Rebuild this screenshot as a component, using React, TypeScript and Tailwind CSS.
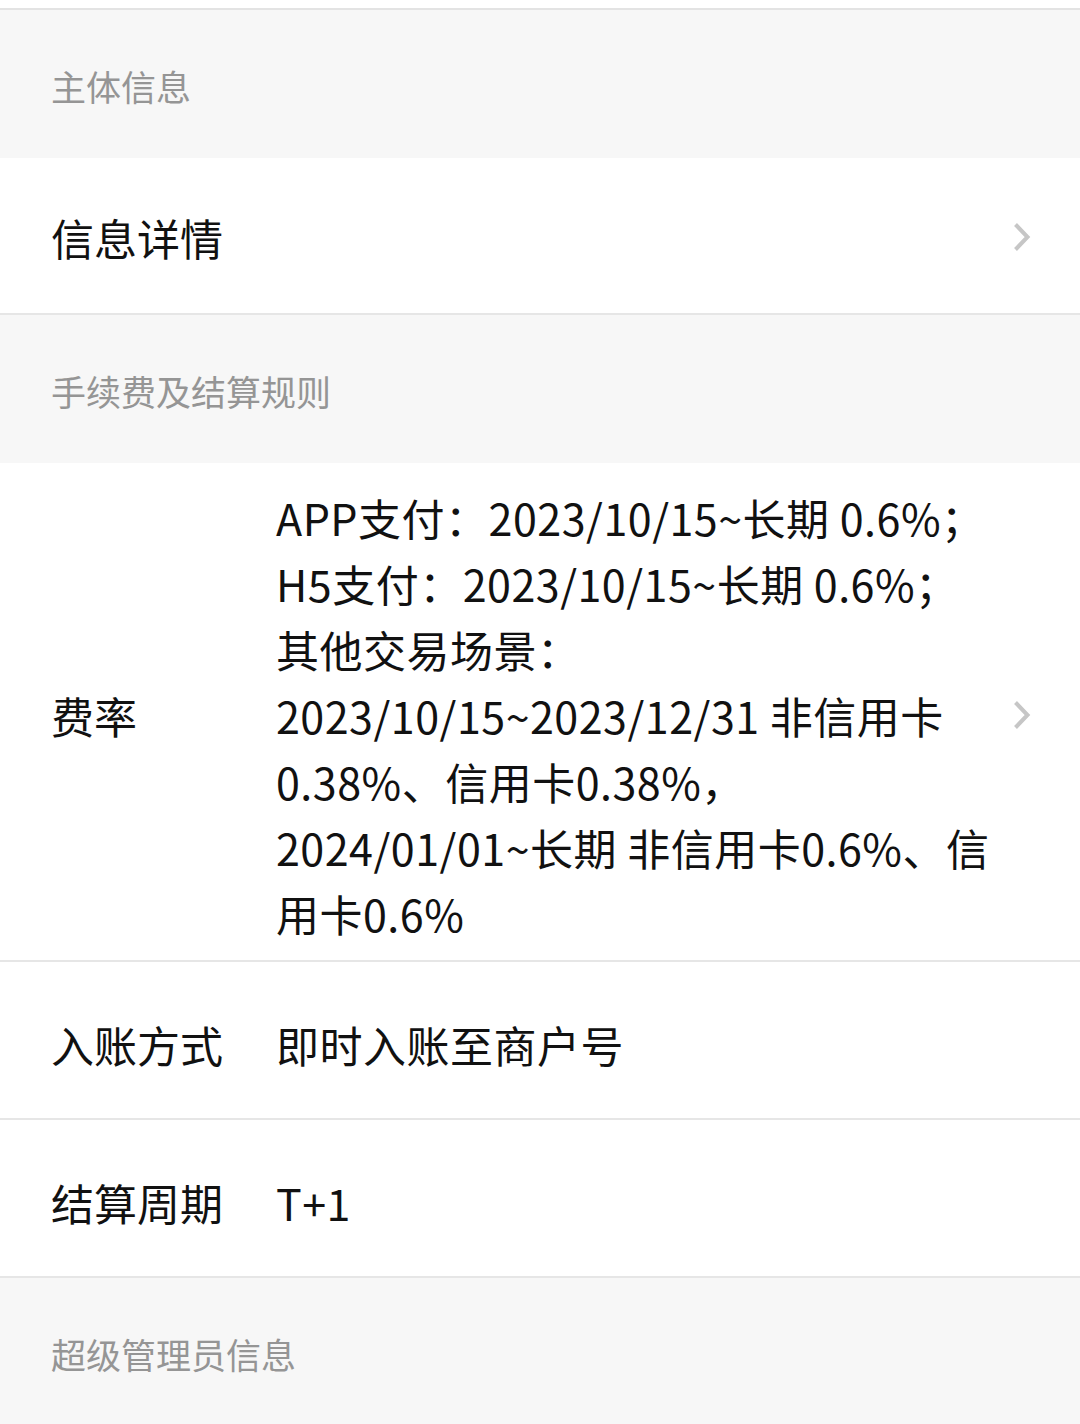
import React from "react";

const font = { fontFamily: '"Noto Sans CJK SC", "Noto Sans", sans-serif' };

function Chevron() {
  return (
    <svg width="20" height="32" viewBox="0 0 20 32" className="shrink-0">
      <path d="M3.5 3.5 L15.5 16 L3.5 28.5" fill="none" stroke="#c6c6c6" strokeWidth="4" strokeLinecap="butt" strokeLinejoin="miter" />
    </svg>
  );
}

function SectionHeader({ title }: { title: string }) {
  return (
    <div className="h-[148px] bg-[#f7f7f7] px-[51px] flex items-center pt-[4px] text-[35px] text-[#959595]">
      {title}
    </div>
  );
}

function Row({ label, value }: { label: string; value?: React.ReactNode }) {
  return (
    <div className="h-[158px] bg-white border-b-2 border-[#e6e6e6] pl-[51px] pr-[48px] pt-[8px] flex items-center text-[43px] text-[#111111]">
      <div className="w-[225px] shrink-0 whitespace-nowrap">{label}</div>
      <div className="flex-1 whitespace-nowrap tracking-[0.5px]">{value}</div>
    </div>
  );
}

const rateLines = [
  "APP支付：2023/10/15~长期 0.6%；",
  "H5支付：2023/10/15~长期 0.6%；",
  "其他交易场景：",
  "2023/10/15~2023/12/31 非信用卡",
  "0.38%、信用卡0.38%，",
  "2024/01/01~长期 非信用卡0.6%、信",
  "用卡0.6%",
];

export default function App() {
  return (
    <div className="w-[1080px] min-h-[1424px] bg-[#f7f7f7]" style={font}>
      <div className="h-[8px] bg-white border-b-2 border-[#e3e3e3] box-content" />
      <SectionHeader title="主体信息" />
      <div className="h-[157px] bg-white border-b-2 border-[#e6e6e6] pl-[51px] pr-[48px] pt-[3px] flex items-center text-[43px] text-[#111111]">
        <div className="flex-1">信息详情</div>
        <Chevron />
      </div>
      <SectionHeader title="手续费及结算规则" />
      <div className="bg-white border-b-2 border-[#e6e6e6] pl-[51px] pr-[48px] pt-[21px] pb-[14px] flex items-center text-[43px] text-[#111111]">
        <div className="w-[225px] shrink-0">费率</div>
        <div className="flex-1 leading-[66px] tracking-[0.5px]">
          {rateLines.map((l) => (
            <div key={l} className="whitespace-nowrap">{l}</div>
          ))}
        </div>
        <Chevron />
      </div>
      <Row label="入账方式" value="即时入账至商户号" />
      <Row label="结算周期" value="T+1" />
      <SectionHeader title="超级管理员信息" />
    </div>
  );
}
